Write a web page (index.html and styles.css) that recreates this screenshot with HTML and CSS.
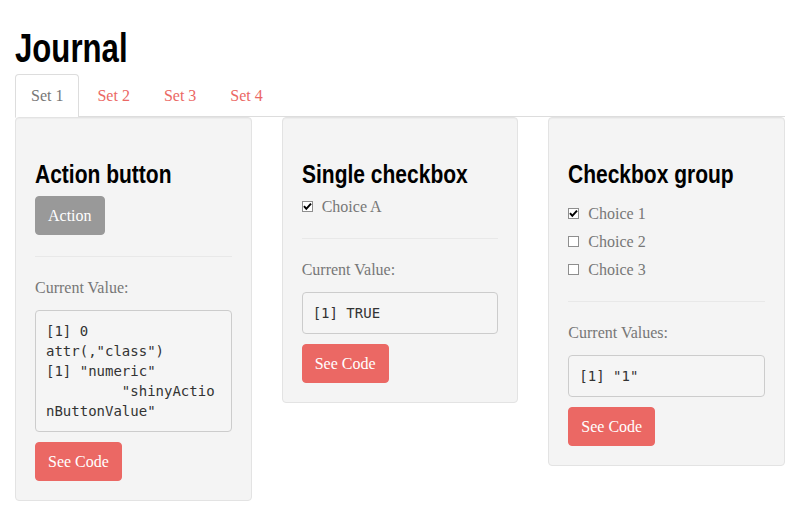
FILE: index.html
```html
<!DOCTYPE html>
<html>
<head>
<meta charset="utf-8">
<link rel="stylesheet" href="styles.css">
</head>
<body>
<div class="container">
  <h2 class="title"><span class="narrow">Journal</span></h2>
  <ul class="tabs">
    <li class="tab active"><a>Set 1</a></li>
    <li class="tab"><a>Set 2</a></li>
    <li class="tab"><a>Set 3</a></li>
    <li class="tab"><a>Set 4</a></li>
  </ul>
  <div class="row">
    <div class="well">
      <h3 class="card-title"><span class="narrow">Action button</span></h3>
      <button class="btn btn-default">Action</button>
      <hr class="sep">
      <p class="muted">Current Value:</p>
      <pre class="out">[1] 0
attr(,"class")
[1] "numeric"
         "shinyActio
nButtonValue"</pre>
      <button class="btn btn-primary">See Code</button>
    </div>
    <div class="well">
      <h3 class="card-title"><span class="narrow">Single checkbox</span></h3>
      <div class="checks">
        <label class="check"><span class="cb"><svg viewBox="0 0 11 11" width="11" height="11"><path d="M2 5.2 L4.3 7.8 L9 2.6" fill="none" stroke="#000" stroke-width="2"/></svg></span><span>Choice A</span></label>
      </div>
      <hr class="sep">
      <p class="muted">Current Value:</p>
      <pre class="out">[1] TRUE</pre>
      <button class="btn btn-primary">See Code</button>
    </div>
    <div class="well">
      <h3 class="card-title"><span class="narrow">Checkbox group</span></h3>
      <div class="checks group">
        <label class="check"><span class="cb"><svg viewBox="0 0 11 11" width="11" height="11"><path d="M2 5.2 L4.3 7.8 L9 2.6" fill="none" stroke="#000" stroke-width="2"/></svg></span><span>Choice 1</span></label>
        <label class="check"><span class="cb"></span><span>Choice 2</span></label>
        <label class="check"><span class="cb"></span><span>Choice 3</span></label>
      </div>
      <hr class="sep">
      <p class="muted">Current Values:</p>
      <pre class="out">[1] "1"</pre>
      <button class="btn btn-primary">See Code</button>
    </div>
  </div>
</div>
</body>
</html>
```
FILE: styles.css
```css
html, body {
  margin: 0;
  padding: 0;
  background: #fff;
}
body {
  font-family: "Liberation Serif", "DejaVu Serif", serif;
  font-size: 16px;
  line-height: 21px;
  color: #777;
}
.container {
  padding: 0 15px;
}
.narrow {
  display: inline-block;
  white-space: nowrap;
  transform-origin: left center;
}
.title {
  font-family: "Liberation Sans", Arial, sans-serif;
  font-weight: 700;
  font-size: 41px;
  line-height: 44px;
  color: #000;
  margin: 26px 0 4px;
}
.title .narrow {
  transform: scaleX(0.76);
}
.tabs {
  list-style: none;
  margin: 0;
  padding: 0;
  display: flex;
  border-bottom: 1px solid #ddd;
  height: 42px;
}
.tab {
  margin-right: 2px;
}
.tab a {
  display: block;
  padding: 10px 15px;
  line-height: 22px;
  border: 1px solid transparent;
  border-radius: 4px 4px 0 0;
  color: #eb6864;
}
.tab.active a {
  color: #777;
  background: #fff;
  border-color: #ddd #ddd transparent;
}
.row {
  display: grid;
  grid-template-columns: repeat(3, minmax(0, 1fr));
  column-gap: 30px;
  align-items: start;
}
.well {
  min-width: 0;
  overflow: hidden;
  background: #f4f4f4;
  border: 1px solid #e3e3e3;
  border-radius: 4px;
  padding: 19px;
  box-shadow: inset 0 1px 1px rgba(0,0,0,0.03);
}
.card-title {
  font-family: "Liberation Sans", Arial, sans-serif;
  font-weight: 700;
  font-size: 25px;
  line-height: 28px;
  color: #000;
  margin: 23px 0 8px;
}
.card-title .narrow {
  transform: scaleX(0.84);
}
.btn {
  display: inline-block;
  font-family: "Liberation Serif", "DejaVu Serif", serif;
  font-size: 16px;
  line-height: 21px;
  padding: 8px 12px;
  border: 1px solid transparent;
  border-radius: 4px;
  color: #fff;
  cursor: pointer;
}
.btn-default {
  background: #999;
  border-color: #999;
}
.btn-primary {
  background: #eb6864;
  border-color: #eb6864;
}
.sep {
  border: 0;
  border-top: 1px solid #e8e8e8;
  margin: 21px 0 20px;
}
.muted {
  margin: 0 0 12px;
  color: #777;
}
.out {
  font-family: "DejaVu Sans Mono", "Liberation Mono", monospace;
  font-size: 14px;
  line-height: 20px;
  color: #333;
  background: #f5f5f5;
  border: 1px solid #ccc;
  border-radius: 4px;
  padding: 10px;
  margin: 0 0 10px;
  white-space: pre;
  overflow: hidden;
}
.checks {
  display: flex;
  flex-direction: column;
  gap: 7px;
}
.checks.group {
  padding-top: 7px;
}
.check {
  display: block;
  line-height: 21px;
}
.cb {
  display: inline-block;
  width: 11px;
  height: 11px;
  box-sizing: border-box;
  border: 1px solid #8e8e8e;
  background: #fff;
  margin-right: 9px;
  position: relative;
  vertical-align: baseline;
}
.cb svg {
  position: absolute;
  left: -1px;
  top: -1px;
}
```
